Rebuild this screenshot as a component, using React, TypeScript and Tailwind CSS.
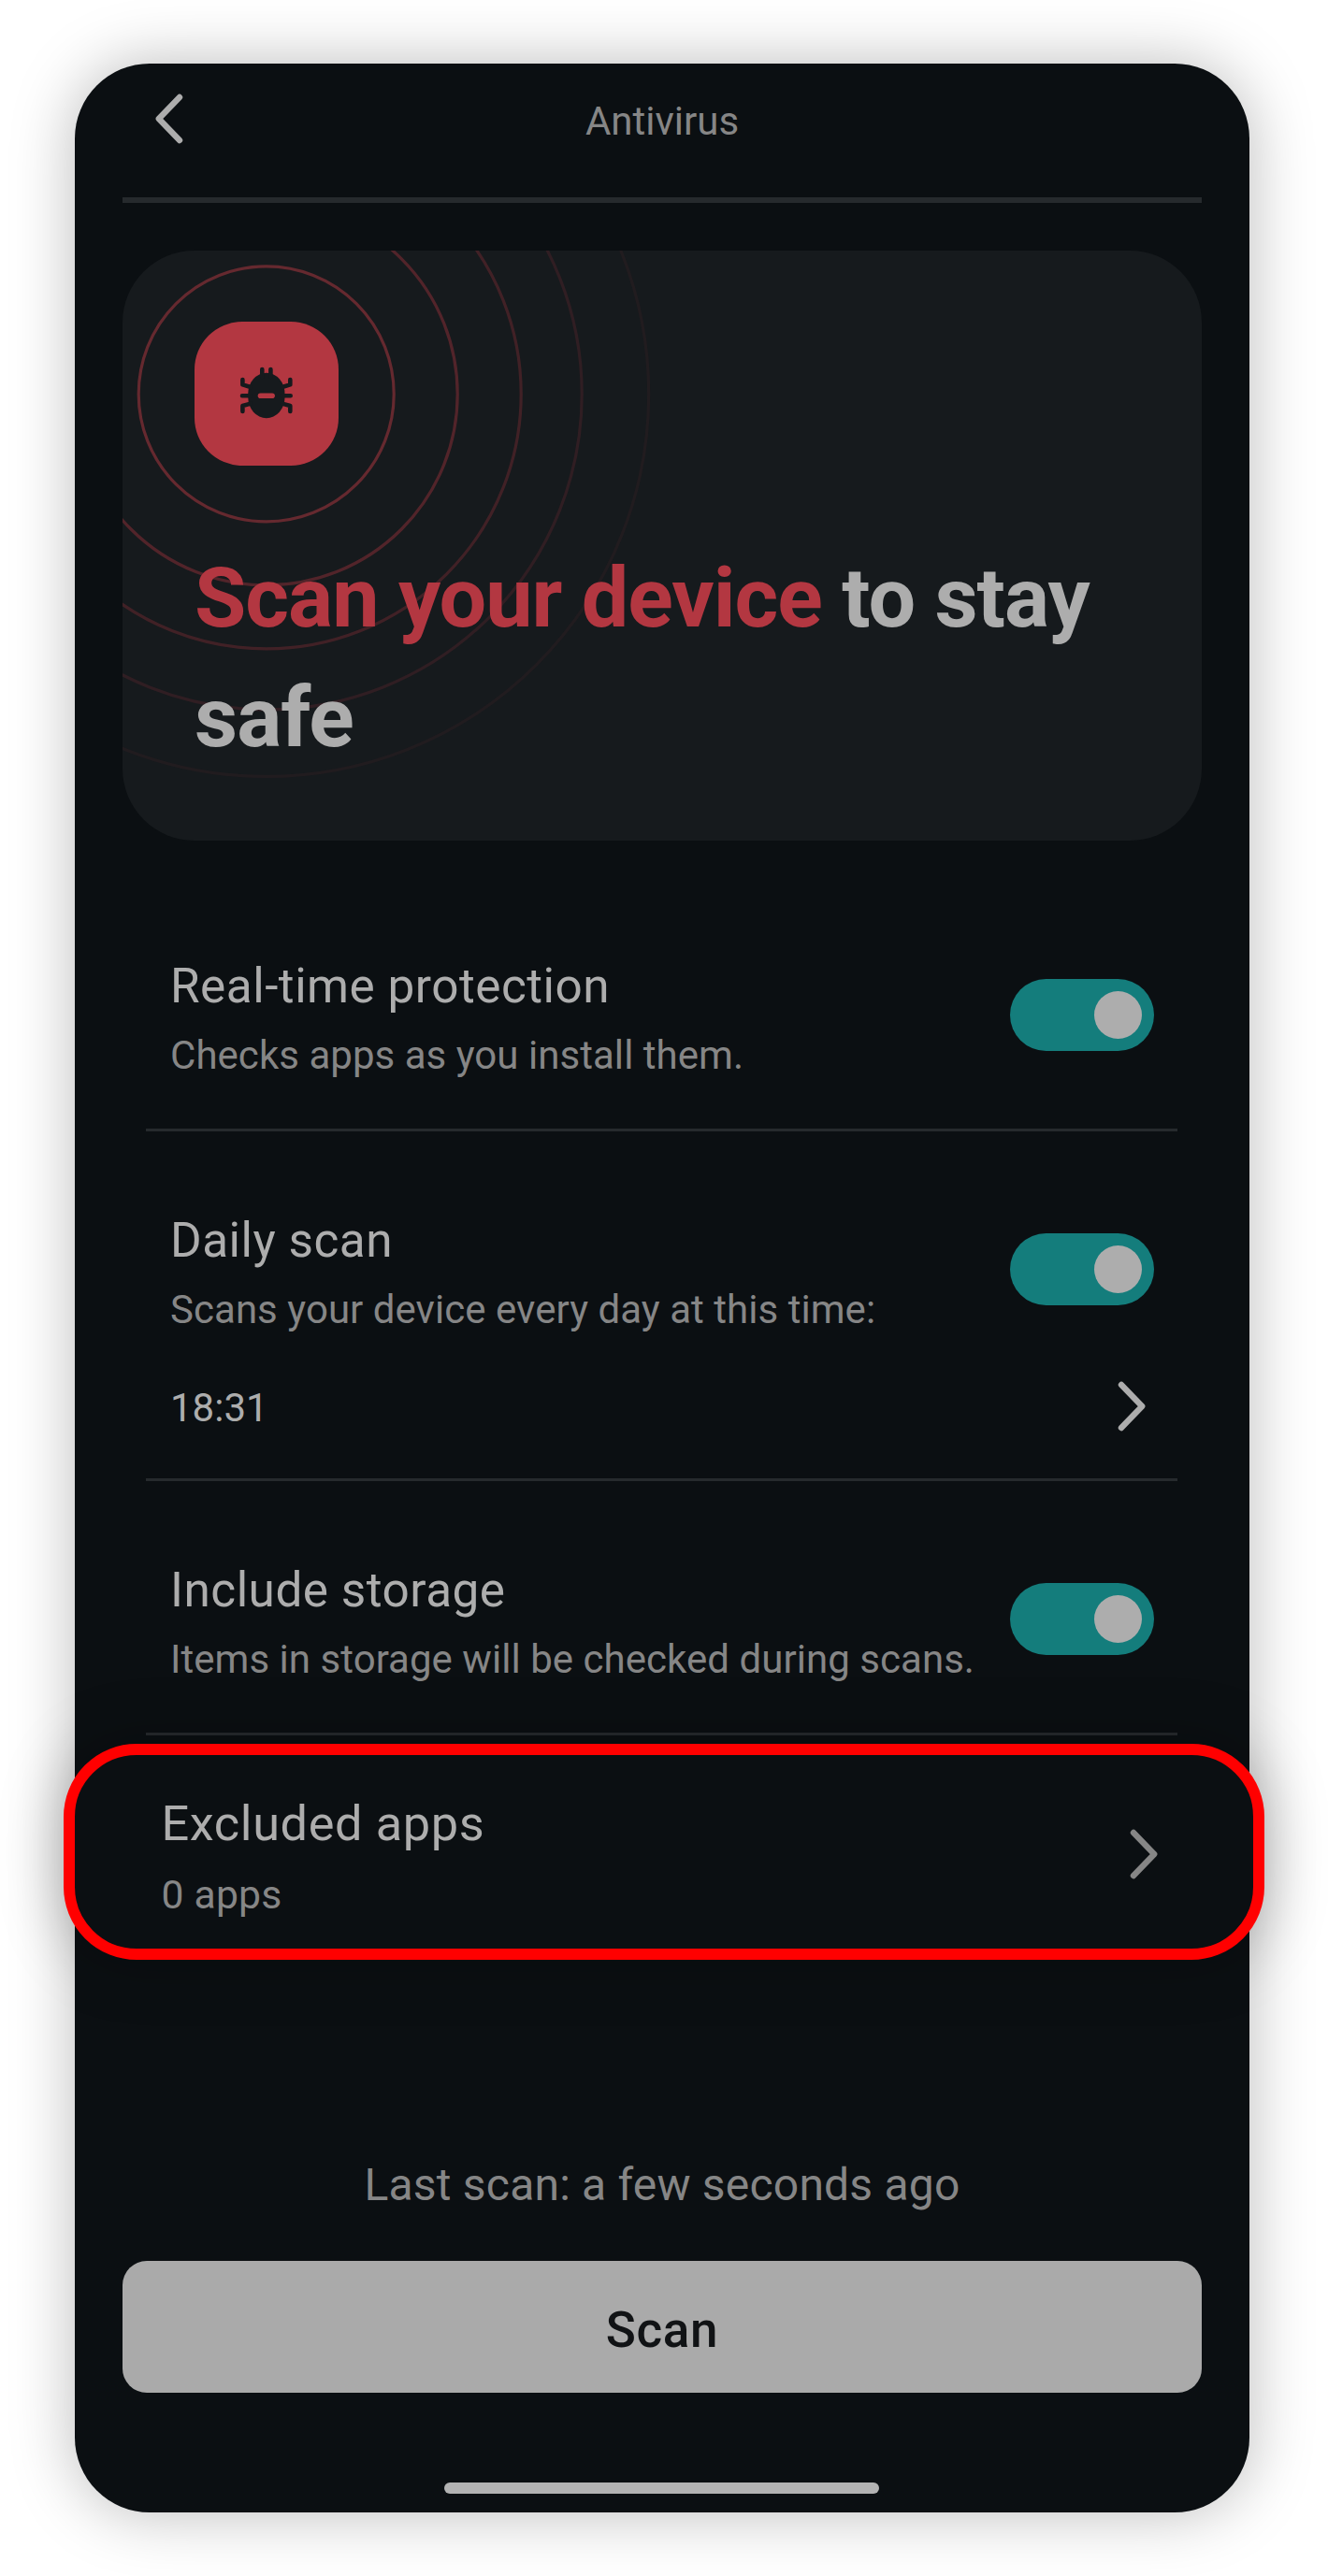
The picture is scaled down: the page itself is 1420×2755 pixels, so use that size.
import { useState } from "react";

const RINGS = [
  { r: 136.5, opacity: 0.5 },
  { r: 204.5, opacity: 0.39 },
  { r: 272.5, opacity: 0.28 },
  { r: 337.5, opacity: 0.17 },
  { r: 409, opacity: 0.07 },
];

function Chevron({ className, left = false }: { className: string; left?: boolean }) {
  return (
    <svg
      viewBox="0 0 30 54"
      fill="none"
      stroke="currentColor"
      strokeWidth="6.4"
      strokeLinecap="round"
      strokeLinejoin="round"
      className={`h-[54px] w-[30px] shrink-0 ${className}`}
    >
      <path d={left ? "M26 4 3.8 27 26 50" : "M4 4 26.2 27 4 50"} />
    </svg>
  );
}

function BugIcon() {
  return (
    <svg viewBox="0 0 154 154" className="h-full w-full text-[#161a1d]">
      <rect x="57.3" y="54.8" width="39.2" height="48.4" rx="19.6" ry="22" fill="currentColor" />
      <g fill="none" stroke="currentColor" strokeWidth="4.6" strokeLinecap="round" strokeLinejoin="round">
        <path d="M72.3 51v8M81.4 51v8" />
        <path d="M51.4 62v5.4l8.6 2.6M102.3 62v5.4l-8.6 2.6" />
        <path d="M51 79.2h9M102.7 79.2h-9" />
        <path d="M51.4 96v-6l8.6-2.4M102.3 96v-6l-8.6-2.4" />
      </g>
      <rect x="67.7" y="76.4" width="18.2" height="5.6" rx="2.8" fill="#b33741" />
    </svg>
  );
}

function Toggle({ label }: { label: string }) {
  const [on, setOn] = useState(true);
  return (
    <button
      role="switch"
      aria-checked={on}
      aria-label={label}
      onClick={() => setOn(!on)}
      className={`mt-[29px] flex h-[77px] w-[154px] shrink-0 items-center rounded-full px-[13px] ${
        on ? "justify-end bg-[#147d7c]" : "justify-start bg-[#24282b]"
      }`}
    >
      <span className="size-[51px] rounded-full bg-[#adadad]" />
    </button>
  );
}

function Setting({ title, detail }: { title: string; detail: string }) {
  return (
    <div className="flex h-[148px] items-start justify-between">
      <div className="pt-px whitespace-nowrap">
        <div className="text-[51.3px] leading-[72px] tracking-[0.5px] text-[#adadad]">{title}</div>
        <div className="text-[42px] leading-[76px] tracking-[0.04px] text-[#868686]">{detail}</div>
      </div>
      <Toggle label={title} />
    </div>
  );
}

export default function App() {
  return (
    <div className="h-[2755px] w-[1420px] overflow-hidden bg-white pt-[68px] font-['Roboto',sans-serif]">
      <main className="ml-[80px] flex h-[2619px] w-[1256px] flex-col rounded-[80px] bg-[#0b0f12] shadow-[0_0_68px_rgba(0,0,0,0.27)]">
        <header className="mx-[51px] h-[149px] border-b-[6px] border-[#262a2d]">
          <div className="grid h-[118px] grid-cols-3 items-center px-[35px]">
            <Chevron left className="text-[#adadad]" />
            <h1 className="pt-1.5 text-center text-[42px] leading-[50px] text-[#868686]">Antivirus</h1>
          </div>
        </header>

        <section className="relative mx-[51px] mt-[51px] h-[631px] overflow-hidden rounded-[77px] bg-[#161a1d] px-[77px] pt-[76px]">
          <svg viewBox="0 0 1154 631" className="absolute inset-0 h-full w-full" fill="none">
            {RINGS.map((ring) => (
              <circle
                key={ring.r}
                cx="153.7"
                cy="153.4"
                r={ring.r}
                stroke="#b33741"
                strokeOpacity={ring.opacity}
                strokeWidth="3.2"
              />
            ))}
          </svg>
          <div className="relative size-[154px] rounded-[51px] bg-[#b33741]">
            <BugIcon />
          </div>
          <h2 className="relative mt-[78px] text-[89.8px] font-bold leading-[128px] tracking-[-0.98px] text-[#adadad]">
            <span className="text-[#b33741]">Scan your device</span> to stay
            <br />
            safe
          </h2>
        </section>

        <div className="mr-[77px] ml-[76px] mt-[119px]">
          <div className="border-b-[3px] border-[#262a2d] pr-[25px] pb-[41px] pl-[26px]">
            <Setting title="Real-time protection" detail="Checks apps as you install them." />
          </div>
          <div className="border-b-[3px] border-[#262a2d] pt-[80px] pr-[25px] pb-[35px] pl-[26px]">
            <Setting title="Daily scan" detail="Scans your device every day at this time:" />
            <div className="mt-[24px] flex h-[84px] items-center justify-between pr-[9px]">
              <span className="pt-1 text-[42px] leading-[50px] text-[#adadad]">18:31</span>
              <Chevron className="text-[#adadad]" />
            </div>
          </div>
          <div className="border-b-[3px] border-[#262a2d] pt-[80px] pr-[25px] pb-[41px] pl-[26px]">
            <Setting title="Include storage" detail="Items in storage will be checked during scans." />
          </div>
        </div>

        <div className="relative mt-[9px] -mr-[16px] -ml-[12px] flex h-[231px] items-start justify-between rounded-[78px] border-[12px] border-[#ff0000] bg-[#0b0f12] pt-[37px] pr-[102px] pl-[92.5px] shadow-[0_0_68px_rgba(0,0,0,0.27)]">
          <div>
            <div className="text-[52.3px] leading-[72px] tracking-[0.6px] text-[#adadad]">Excluded apps</div>
            <div className="text-[42.7px] leading-[80px] tracking-[0.2px] text-[#868686]">0 apps</div>
          </div>
          <Chevron className="mt-[42px] text-[#868686]" />
        </div>

        <p className="mt-[209px] text-center text-[48px] leading-[64px] tracking-[0.2px] text-[#868686]">
          Last scan: a few seconds ago
        </p>
        <button className="mx-[51px] mt-[49px] h-[141px] rounded-[26px] bg-[#aaaaaa] pt-[8px] text-[53px] font-medium tracking-[0.7px] text-[#111315]">
          Scan
        </button>
        <div className="mt-[96px] ml-[395px] h-[12px] w-[465px] rounded-full bg-[#b3b3b3]" />
      </main>
    </div>
  );
}
